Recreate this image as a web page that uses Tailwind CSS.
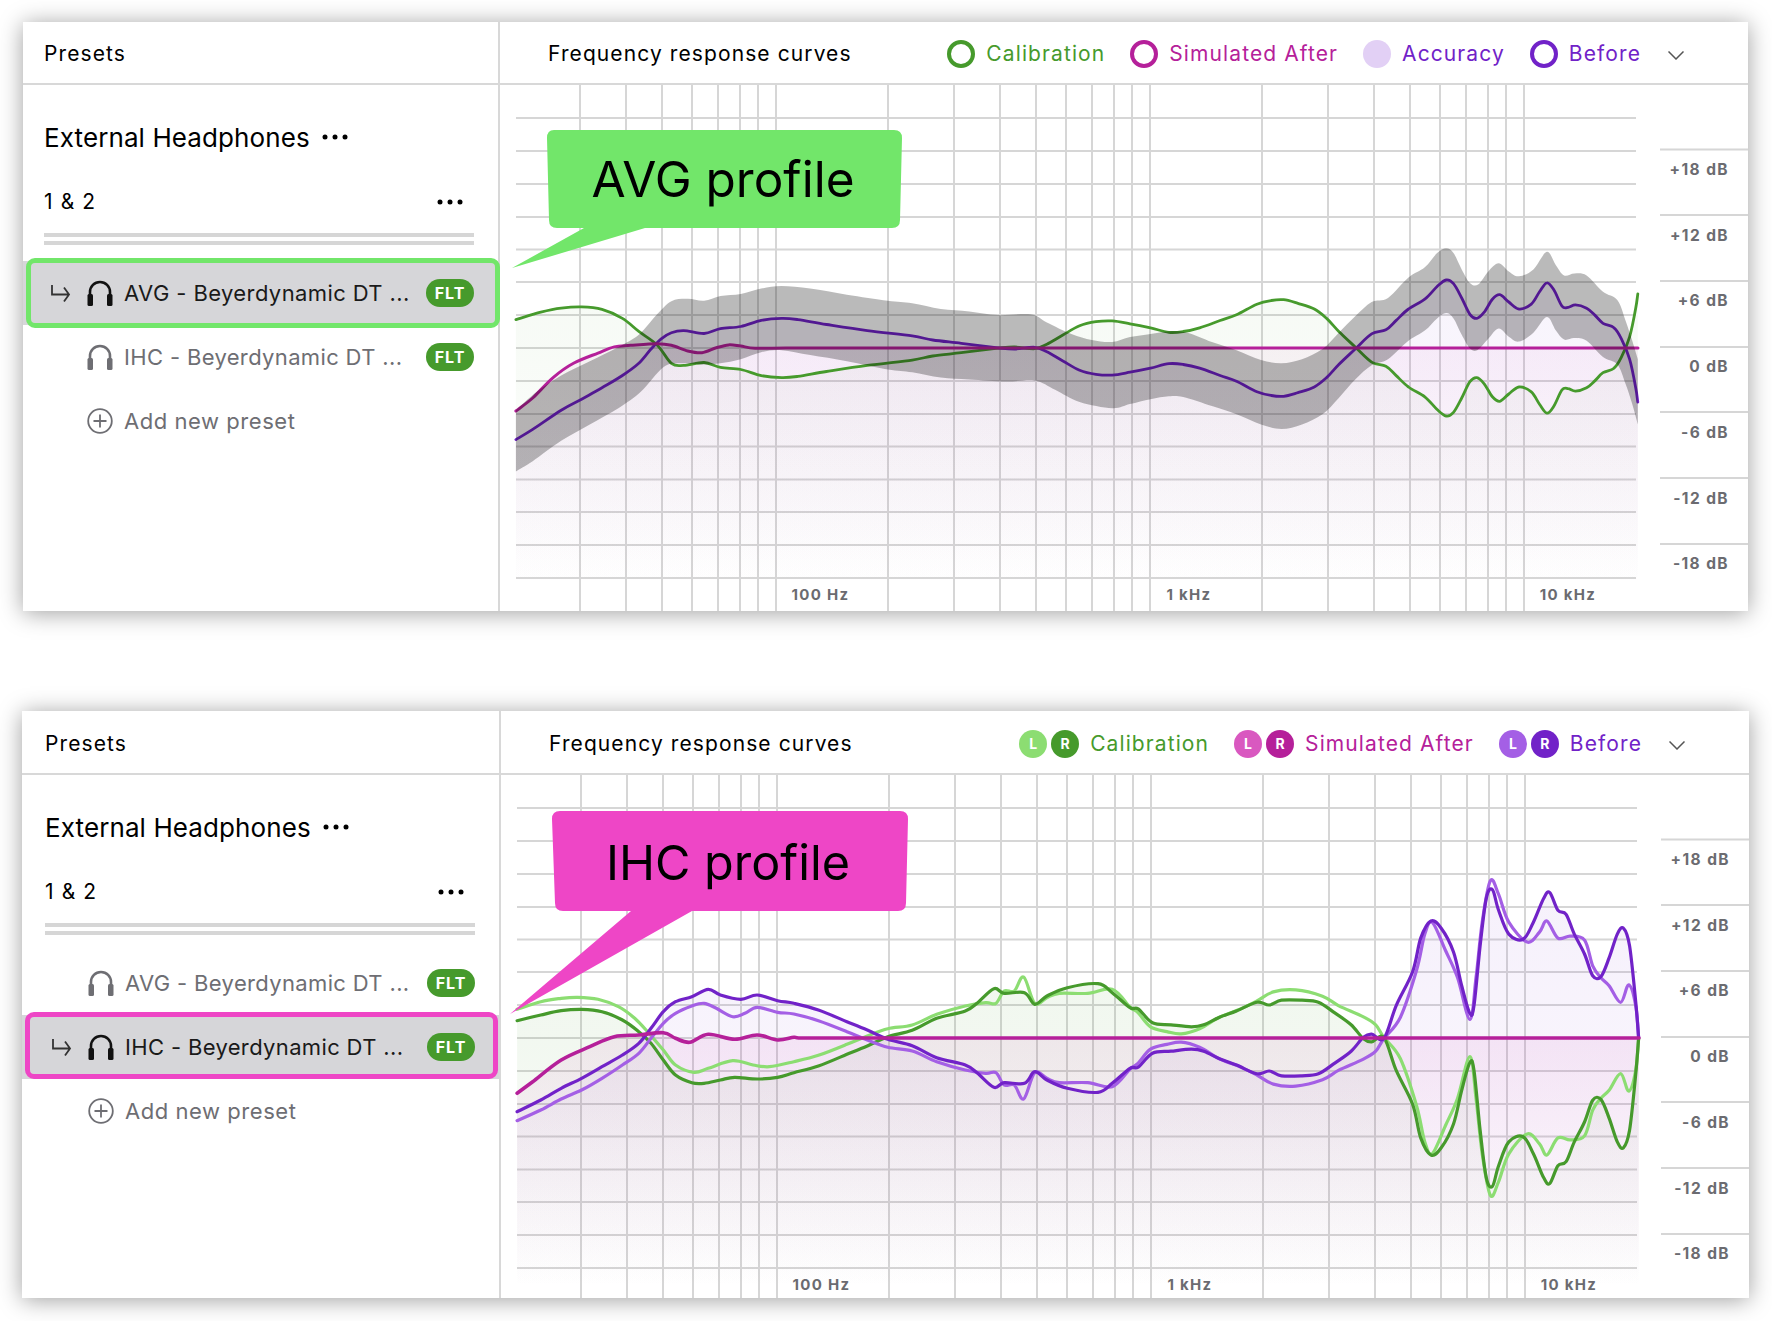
<!DOCTYPE html>
<html lang="en">
<head>
<meta charset="utf-8">
<title>Presets</title>
<script src="https://cdn.jsdelivr.net/npm/@tailwindcss/browser@4"></script>
</head>
<body class="bg-white [font-family:Inter,sans-serif] text-black">
<div class="w-[1772px] h-[1321px] pt-[22px] overflow-hidden">

<!-- PANEL 1 -->
<section class="ml-[23px] w-[1725px] h-[589px] flex bg-white shadow-[0_2px_22px_rgba(0,0,0,0.38)]">
  <aside class="w-[477px] shrink-0 border-r-2 border-[#d8d8d8] flex flex-col">
    <div class="h-[63px] shrink-0 border-b-2 border-[#d8d8d8] flex items-center pl-[21px] pt-[2px] text-[21px] tracking-[1.1px]">Presets</div>
    <div class="pl-[21px] pr-[24px] pt-[33px]">
      <div class="flex items-center h-[38px] gap-[12px] text-[26px] tracking-[0.1px]">External Headphones
        <svg width="26" height="6" viewBox="0 0 26 6" class="fill-black"><circle cx="3" cy="3" r="2.5"/><circle cx="13" cy="3" r="2.5"/><circle cx="23" cy="3" r="2.5"/></svg>
      </div>
      <div class="flex items-center justify-between h-[28px] mt-[32px] text-[21px] tracking-[1.1px]">1 &amp; 2
        <svg width="26" height="6" viewBox="0 0 26 6" class="fill-black mr-[11px]"><circle cx="3" cy="3" r="2.5"/><circle cx="13" cy="3" r="2.5"/><circle cx="23" cy="3" r="2.5"/></svg>
      </div>
      <div class="mt-[17px] h-[4px] bg-[#d6d6d6]"></div>
      <div class="mt-[4px] h-[4px] bg-[#d6d6d6]"></div>
    </div>
    <div class="mt-[16px] relative">
      <div class="h-[64px] bg-[#d6d6d9] relative flex items-center pr-[24px] text-[22px] tracking-[0.4px] text-[#1a1a1a]">
        <div class="absolute left-[3px] right-[-2px] top-[-3px] bottom-[-3px] rounded-[9px] border-[5px] border-[#72e66a]"></div>
        <svg width="21" height="19" viewBox="0 0 21 19" fill="none" class="ml-[27px] stroke-[#333] stroke-[1.8]"><path d="M2 1V10.500H19M14 3.500L19 10.500L14 17.500"/></svg>
        <svg width="26" height="26" viewBox="0 0 26 26" class="ml-[16px] fill-none stroke-[#111]"><path stroke-width="2.6" d="M3 22V12a10 10 0 0 1 20 0V22"/><rect x="0.500" y="14" width="5.500" height="12" rx="1.500" fill="#111" stroke="none"/><rect x="20" y="14" width="5.500" height="12" rx="1.500" fill="#111" stroke="none"/></svg>
        <span class="ml-[11px] flex-1 whitespace-nowrap">AVG - Beyerdynamic DT ...</span>
        <span class="w-[48px] h-[28px] rounded-full bg-[#469a2c] text-white text-[16px] font-bold tracking-[1px] flex items-center justify-center">FLT</span>
      </div>
      <div class="h-[64px] flex items-center pr-[24px] text-[22px] tracking-[0.35px] text-[#6e6e73]">
        <svg width="26" height="26" viewBox="0 0 26 26" class="ml-[64px] fill-none stroke-[#6e6e73]"><path stroke-width="2.6" d="M3 22V12a10 10 0 0 1 20 0V22"/><rect x="0.500" y="14" width="5.500" height="12" rx="1.500" fill="#6e6e73" stroke="none"/><rect x="20" y="14" width="5.500" height="12" rx="1.500" fill="#6e6e73" stroke="none"/></svg>
        <span class="ml-[11px] flex-1 whitespace-nowrap">IHC - Beyerdynamic DT ...</span>
        <span class="w-[48px] h-[28px] rounded-full bg-[#469a2c] text-white text-[16px] font-bold tracking-[1px] flex items-center justify-center">FLT</span>
      </div>
      <div class="h-[64px] flex items-center pr-[24px] text-[22px] tracking-[0.55px] text-[#6e6e73]">
        <svg width="26" height="26" viewBox="0 0 26 26" class="ml-[64px] fill-none stroke-[#6e6e73] stroke-[1.8]"><circle cx="13" cy="13" r="11.800"/><path d="M13 6.500V19.500M6.500 13H19.500"/></svg>
        <span class="ml-[11px]">Add new preset</span>
      </div>
    </div>
  </aside>
  <div class="flex-1 flex flex-col min-w-0">
    <header class="h-[63px] shrink-0 border-b-2 border-[#d8d8d8] flex items-center justify-between pl-[48px] pr-[64px] pt-[2px] text-[21px] tracking-[1.1px]">
      <span class="whitespace-nowrap">Frequency response curves</span>
      <div class="flex items-center gap-[25px]">
        <div class="flex items-center gap-[11px] text-[#469a2c]"><span class="w-[28px] h-[28px] rounded-full border-4 border-[#469a2c]"></span>Calibration</div>
        <div class="flex items-center gap-[11px] text-[#b5209a]"><span class="w-[28px] h-[28px] rounded-full border-4 border-[#b5209a]"></span>Simulated After</div>
        <div class="flex items-center gap-[11px] text-[#7122c8]"><span class="w-[28px] h-[28px] rounded-full bg-[#e2d0f5]"></span>Accuracy</div>
        <div class="flex items-center gap-[11px] text-[#7122c8]"><span class="w-[28px] h-[28px] rounded-full border-4 border-[#7122c8]"></span>Before</div>
        <svg width="16" height="9" viewBox="0 0 16 9" class="fill-none stroke-[#555] stroke-[1.5] mt-[4px] ml-[2px]"><path d="M0.5 0.5L8 8L15.5 0.5"/></svg>
      </div>
    </header>
    <svg id="c1" width="1248" height="526" viewBox="500 85 1248 526" class="block [font-family:Inter,sans-serif]">
      <path class="fill-none stroke-[#d6d6d6] stroke-2" d="M580 85V611M626 85V611M662 85V611M692 85V611M718 85V611M740 85V611M758 85V611M776 85V611M888 85V611M954 85V611M1000 85V611M1036 85V611M1066 85V611M1092 85V611M1114 85V611M1132 85V611M1150 85V611M1262 85V611M1328 85V611M1374 85V611M1410 85V611M1440 85V611M1466 85V611M1488 85V611M1506 85V611M1524 85V611"/>
      <path class="fill-none stroke-[#d6d6d6] stroke-2" d="M516 118H1636M516 151H1636M516 184H1636M516 217H1636M516 249.500H1636M516 282H1636M516 315H1636M516 348H1636M516 381H1636M516 414H1636M516 446.500H1636M516 479.500H1636M516 512H1636M516 545H1636M516 578H1636M1660 149.500H1748M1660 215H1748M1660 281H1748M1660 347H1748M1660 412H1748M1660 478H1748M1660 544H1748"/>
      <defs>
        <linearGradient id="gg1" gradientUnits="userSpaceOnUse" x1="0" y1="250" x2="0" y2="590"><stop offset="0" stop-color="#469a2c" stop-opacity=".05"/><stop offset=".3" stop-color="#469a2c" stop-opacity=".04"/><stop offset="1" stop-color="#469a2c" stop-opacity="0"/></linearGradient>
        <linearGradient id="gp1" gradientUnits="userSpaceOnUse" x1="0" y1="250" x2="0" y2="590"><stop offset="0" stop-color="#7122c8" stop-opacity=".05"/><stop offset=".3" stop-color="#7122c8" stop-opacity=".045"/><stop offset="1" stop-color="#7122c8" stop-opacity="0"/></linearGradient>
        <linearGradient id="gm1" gradientUnits="userSpaceOnUse" x1="0" y1="340" x2="0" y2="590"><stop offset="0" stop-color="#c020a0" stop-opacity=".05"/><stop offset="1" stop-color="#c020a0" stop-opacity="0"/></linearGradient>
      </defs>
      <g id="p1"></g>
      <path fill="#72e66a" d="M554 130H894Q902 130 902 138L900 220Q900 228 892 228H645L512 268L584 228H557Q549 228 549 220L547 138Q547 130 554 130Z"/>
      <text x="723" y="197" text-anchor="middle" font-size="49.500" fill="#000">AVG profile</text>
      <g class="fill-[#6b6b70] font-bold text-[15.5px] tracking-[1.4px]" text-anchor="end">
        <text x="1729" y="175">+18 dB</text><text x="1729" y="241">+12 dB</text><text x="1729" y="306">+6 dB</text><text x="1729" y="372">0 dB</text><text x="1729" y="438">-6 dB</text><text x="1729" y="504">-12 dB</text><text x="1729" y="569">-18 dB</text>
      </g>
      <g class="fill-[#6b6b70] font-bold text-[15px] tracking-[1.3px]" text-anchor="middle">
        <text x="820.500" y="600">100 Hz</text><text x="1189" y="600">1 kHz</text><text x="1568" y="600">10 kHz</text>
      </g>
    </svg>
  </div>
</section>

<!-- PANEL 2 -->
<section class="mt-[100px] ml-[22px] w-[1727px] h-[587px] flex bg-white shadow-[0_2px_22px_rgba(0,0,0,0.38)]">
  <aside class="w-[479px] shrink-0 border-r-2 border-[#d8d8d8] flex flex-col">
    <div class="h-[64px] shrink-0 border-b-2 border-[#d8d8d8] flex items-center pl-[23px] pt-[3px] text-[21px] tracking-[1.1px]">Presets</div>
    <div class="pl-[23px] pr-[24px] pt-[33px]">
      <div class="flex items-center h-[38px] gap-[12px] text-[26px] tracking-[0.1px]">External Headphones
        <svg width="26" height="6" viewBox="0 0 26 6" class="fill-black"><circle cx="3" cy="3" r="2.5"/><circle cx="13" cy="3" r="2.5"/><circle cx="23" cy="3" r="2.5"/></svg>
      </div>
      <div class="flex items-center justify-between h-[28px] mt-[32px] text-[21px] tracking-[1.1px]">1 &amp; 2
        <svg width="26" height="6" viewBox="0 0 26 6" class="fill-black mr-[11px]"><circle cx="3" cy="3" r="2.5"/><circle cx="13" cy="3" r="2.5"/><circle cx="23" cy="3" r="2.5"/></svg>
      </div>
      <div class="mt-[17px] h-[4px] bg-[#d6d6d6]"></div>
      <div class="mt-[4px] h-[4px] bg-[#d6d6d6]"></div>
    </div>
    <div class="mt-[16px] relative">
      <div class="h-[64px] flex items-center pr-[24px] text-[22px] tracking-[0.35px] text-[#6e6e73]">
        <svg width="26" height="26" viewBox="0 0 26 26" class="ml-[66px] fill-none stroke-[#6e6e73]"><path stroke-width="2.6" d="M3 22V12a10 10 0 0 1 20 0V22"/><rect x="0.500" y="14" width="5.500" height="12" rx="1.500" fill="#6e6e73" stroke="none"/><rect x="20" y="14" width="5.500" height="12" rx="1.500" fill="#6e6e73" stroke="none"/></svg>
        <span class="ml-[11px] flex-1 whitespace-nowrap">AVG - Beyerdynamic DT ...</span>
        <span class="w-[48px] h-[28px] rounded-full bg-[#469a2c] text-white text-[16px] font-bold tracking-[1px] flex items-center justify-center">FLT</span>
      </div>
      <div class="h-[64px] bg-[#d6d6d9] relative flex items-center pr-[24px] text-[22px] tracking-[0.35px] text-[#1a1a1a]">
        <div class="absolute left-[3px] right-[1px] top-[-3px] bottom-0 rounded-[9px] border-[5px] border-[#ee46c6]"></div>
        <svg width="21" height="19" viewBox="0 0 21 19" fill="none" class="ml-[29px] stroke-[#333] stroke-[1.8]"><path d="M2 1V10.500H19M14 3.500L19 10.500L14 17.500"/></svg>
        <svg width="26" height="26" viewBox="0 0 26 26" class="ml-[16px] fill-none stroke-[#111]"><path stroke-width="2.6" d="M3 22V12a10 10 0 0 1 20 0V22"/><rect x="0.500" y="14" width="5.500" height="12" rx="1.500" fill="#111" stroke="none"/><rect x="20" y="14" width="5.500" height="12" rx="1.500" fill="#111" stroke="none"/></svg>
        <span class="ml-[11px] flex-1 whitespace-nowrap">IHC - Beyerdynamic DT ...</span>
        <span class="w-[48px] h-[28px] rounded-full bg-[#469a2c] text-white text-[16px] font-bold tracking-[1px] flex items-center justify-center">FLT</span>
      </div>
      <div class="h-[64px] flex items-center pr-[24px] text-[22px] tracking-[0.55px] text-[#6e6e73]">
        <svg width="26" height="26" viewBox="0 0 26 26" class="ml-[66px] fill-none stroke-[#6e6e73] stroke-[1.8]"><circle cx="13" cy="13" r="11.800"/><path d="M13 6.500V19.500M6.500 13H19.500"/></svg>
        <span class="ml-[11px]">Add new preset</span>
      </div>
    </div>
  </aside>
  <div class="flex-1 flex flex-col min-w-0">
    <header class="h-[64px] shrink-0 border-b-2 border-[#d8d8d8] flex items-center justify-between pl-[48px] pr-[64px] pt-[3px] text-[21px] tracking-[1.1px]">
      <span class="whitespace-nowrap">Frequency response curves</span>
      <div class="flex items-center gap-[25px]">
        <div class="flex items-center gap-[11px] text-[#469a2c]"><span class="flex gap-[4px]"><span class="w-[28px] h-[28px] rounded-full bg-[#8cdd72] text-white text-[14px] tracking-normal font-bold flex items-center justify-center">L</span><span class="w-[28px] h-[28px] rounded-full bg-[#469a2c] text-white text-[14px] tracking-normal font-bold flex items-center justify-center">R</span></span>Calibration</div>
        <div class="flex items-center gap-[11px] text-[#b5209a]"><span class="flex gap-[4px]"><span class="w-[28px] h-[28px] rounded-full bg-[#d958c0] text-white text-[14px] tracking-normal font-bold flex items-center justify-center">L</span><span class="w-[28px] h-[28px] rounded-full bg-[#b5209a] text-white text-[14px] tracking-normal font-bold flex items-center justify-center">R</span></span>Simulated After</div>
        <div class="flex items-center gap-[11px] text-[#7122c8]"><span class="flex gap-[4px]"><span class="w-[28px] h-[28px] rounded-full bg-[#a45fe5] text-white text-[14px] tracking-normal font-bold flex items-center justify-center">L</span><span class="w-[28px] h-[28px] rounded-full bg-[#7122c8] text-white text-[14px] tracking-normal font-bold flex items-center justify-center">R</span></span>Before</div>
        <svg width="16" height="9" viewBox="0 0 16 9" class="fill-none stroke-[#555] stroke-[1.5] mt-[4px] ml-[2px]"><path d="M0.5 0.5L8 8L15.5 0.5"/></svg>
      </div>
    </header>
    <svg id="c2" width="1248" height="523" viewBox="500 85 1248 523" class="block [font-family:Inter,sans-serif]">
      <path class="fill-none stroke-[#d6d6d6] stroke-2" d="M580 85V611M626 85V611M662 85V611M692 85V611M718 85V611M740 85V611M758 85V611M776 85V611M888 85V611M954 85V611M1000 85V611M1036 85V611M1066 85V611M1092 85V611M1114 85V611M1132 85V611M1150 85V611M1262 85V611M1328 85V611M1374 85V611M1410 85V611M1440 85V611M1466 85V611M1488 85V611M1506 85V611M1524 85V611"/>
      <path class="fill-none stroke-[#d6d6d6] stroke-2" d="M516 118H1636M516 151H1636M516 184H1636M516 217H1636M516 249.500H1636M516 282H1636M516 315H1636M516 348H1636M516 381H1636M516 414H1636M516 446.500H1636M516 479.500H1636M516 512H1636M516 545H1636M516 578H1636M1660 149.500H1748M1660 215H1748M1660 281H1748M1660 347H1748M1660 412H1748M1660 478H1748M1660 544H1748"/>
      <defs>
        <linearGradient id="gg2" gradientUnits="userSpaceOnUse" x1="0" y1="250" x2="0" y2="600"><stop offset="0" stop-color="#469a2c" stop-opacity=".08"/><stop offset=".3" stop-color="#469a2c" stop-opacity=".07"/><stop offset="1" stop-color="#469a2c" stop-opacity="0"/></linearGradient>
        <linearGradient id="gp2" gradientUnits="userSpaceOnUse" x1="0" y1="250" x2="0" y2="600"><stop offset="0" stop-color="#7122c8" stop-opacity=".06"/><stop offset=".3" stop-color="#7122c8" stop-opacity=".05"/><stop offset="1" stop-color="#7122c8" stop-opacity="0"/></linearGradient>
        <linearGradient id="gm2" gradientUnits="userSpaceOnUse" x1="0" y1="340" x2="0" y2="600"><stop offset="0" stop-color="#c020a0" stop-opacity=".08"/><stop offset="1" stop-color="#c020a0" stop-opacity="0"/></linearGradient>
      </defs>
      <g id="p2"></g>
      <path fill="#ee46c6" d="M559 121H899Q907 121 907 129L905 213Q905 221 897 221H691L509 324L630 221H562Q554 221 554 213L551 129Q551 121 559 121Z"/>
      <text x="727" y="190" text-anchor="middle" font-size="48.500" fill="#000">IHC profile</text>
      <g class="fill-[#6b6b70] font-bold text-[15.5px] tracking-[1.4px]" text-anchor="end">
        <text x="1729" y="175">+18 dB</text><text x="1729" y="241">+12 dB</text><text x="1729" y="306">+6 dB</text><text x="1729" y="372">0 dB</text><text x="1729" y="438">-6 dB</text><text x="1729" y="504">-12 dB</text><text x="1729" y="569">-18 dB</text>
      </g>
      <g class="fill-[#6b6b70] font-bold text-[15px] tracking-[1.3px]" text-anchor="middle">
        <text x="820.500" y="600">100 Hz</text><text x="1189" y="600">1 kHz</text><text x="1568" y="600">10 kHz</text>
      </g>
    </svg>
  </div>
</section>
</div>

<script>
const NS='http://www.w3.org/2000/svg';
const G='#469a2c',LG='#8cdd72',M='#b5209a',V='#7122c8',LV='#a45fe5';
const z2=a=>a.map(([x,y])=>[500+x/2.45,y/2.45]);
const z3=a=>a.map(([x,y])=>[1130+x/2.442,y/2.45]);
const z5=a=>a.map(([x,y])=>[499+x/2.45,210+y/3]);
const z6=a=>a.map(([x,y])=>[1129+x/2.442,10+y/2.52]);
const mirror=a=>a.map(([x,y])=>[x,696-y]);
function line(p){
  let d='M'+p[0][0].toFixed(1)+' '+p[0][1].toFixed(1);
  for(let i=0;i<p.length-1;i++){
    const a=p[Math.max(i-1,0)],b=p[i],c=p[i+1],e=p[Math.min(i+2,p.length-1)];
    d+='C'+(b[0]+(c[0]-a[0])/6).toFixed(1)+' '+(b[1]+(c[1]-a[1])/6).toFixed(1)+' '+(c[0]-(e[0]-b[0])/6).toFixed(1)+' '+(c[1]-(e[1]-b[1])/6).toFixed(1)+' '+c[0].toFixed(1)+' '+c[1].toFixed(1);
  }
  return d;
}
function add(g,d,attrs){const e=document.createElementNS(NS,'path');e.setAttribute('d',d);for(const k in attrs)e.setAttribute(k,attrs[k]);g.appendChild(e);}
function area(p,fill,g){add(g,line(p)+'L'+p[p.length-1][0].toFixed(1)+' 611L'+p[0][0].toFixed(1)+' 611Z',{fill});}
function stroke(p,c,w,g){add(g,line(p),{fill:'none',stroke:c,'stroke-width':w,'stroke-linejoin':'round','stroke-linecap':'round'});}
const flat=(x0)=>{const r=[];for(let x=x0;x<1636;x+=40)r.push([x,348]);r.push([1638,348]);return r;};

/* panel 1 */
const b1=[...z2([[39,1077],[80,1052],[150,1005],[200,978],[250,950],[300,920],[340,890],[370,855],[395,830],[420,815],[450,810],[500,817],[540,805],[590,800],[640,785],[690,780],[730,783],[800,795],[900,810],[1010,823],[1060,833],[1130,841],[1220,852],[1260,855],[1310,851],[1340,862],[1380,885],[1420,907],[1460,917],[1500,919]]),
 ...z3([[0,912],[50,902],[95,891],[130,893],[170,902],[220,920],[260,934],[310,960],[345,969],[375,971],[410,962],[450,948],[480,925],[510,893],[550,855],[590,818],[625,808],[650,785],[680,757],[720,733],[750,702],[772,686],[790,695],[810,730],[830,770],[847,780],[865,765],[885,733],[903,722],[925,740],[950,757],[980,745],[1000,715],[1018,693],[1035,710],[1055,750],[1070,753],[1088,747],[1115,755],[1135,772],[1155,792],[1182,803],[1200,830],[1220,880],[1235,950],[1240,985]])];
const c1=[...z2([[39,783],[100,765],[150,755],[200,752],[250,758],[300,780],[340,812],[385,845]]),...mirror(b1).filter(p=>p[0]>670)];
const s1=[...z2([[39,1007],[80,975],[130,925],[180,890],[240,865],[280,850],[320,846],[385,842],[420,846],[460,860],[495,864],[530,852],[560,845],[590,848],[625,853]]),...flat(786)];
const up=[...z2([[39,1005],[90,960],[150,920],[220,885],[290,850],[340,820],[385,770],[420,738],[460,732],[500,737],[540,725],[590,720],[640,707],[690,701],[760,707],[850,722],[950,737],[1010,743],[1080,757],[1150,763],[1220,772],[1300,770],[1340,790],[1400,818],[1450,833],[1500,838]]),
 ...z3([[0,826],[50,818],[95,812],[140,815],[200,838],[260,858],[320,882],[370,890],[420,880],[470,855],[510,815],[550,775],[590,740],[630,730],[680,680],[720,655],[750,620],[772,608],[790,620],[810,660],[830,693],[850,697],[875,665],[900,645],[925,665],[950,677],[985,660],[1018,617],[1040,650],[1060,675],[1085,670],[1115,675],[1155,715],[1190,735],[1210,785],[1225,830],[1240,880]])];
const lo=[...z2([[39,1155],[80,1130],[150,1080],[220,1040],[290,1000],[345,960],[400,900],[440,890],[500,893],[540,890],[590,880],[640,863],[690,858],[760,870],[850,885],[950,905],[1010,912],[1080,925],[1150,930],[1240,935],[1310,932],[1360,955],[1420,985],[1500,1000]]),
 ...z3([[0,990],[50,978],[95,971],[130,973],[200,995],[260,1015],[320,1040],[370,1051],[420,1040],[470,1015],[510,975],[550,930],[590,895],[630,880],[680,835],[720,810],[750,780],[772,767],[790,780],[810,820],[830,853],[848,858],[875,830],[900,805],[925,825],[950,837],[985,815],[1018,777],[1040,810],[1060,832],[1085,828],[1115,835],[1155,875],[1190,893],[1210,940],[1225,985],[1240,1040]])];
const g1=document.getElementById('p1');
area(c1,'url(#gg1)',g1);area(b1,'url(#gp1)',g1);area(s1,'url(#gm1)',g1);
stroke(c1,G,2.8,g1);stroke(b1,V,2.8,g1);stroke(s1,M,3,g1);
add(g1,line(up)+'L'+line([...lo].reverse()).slice(1)+'Z',{fill:'#000','fill-opacity':'.27'});

/* panel 2 */
const b2=[...z5([[42,635],[100,600],[150,565],[200,535],[250,500],[300,465],[340,430],[370,385],[400,335],[430,305],[470,290],[510,268],[540,285],[590,298],[630,285],[680,302],[720,310],[780,330],[850,365],[900,390],[950,418],[1010,437],[1070,473],[1140,495],[1170,520],[1210,562],[1235,548],[1285,550],[1310,515],[1340,540],[1390,565],[1465,577],[1500,550]]),
 ...z6([[0,928],[20,925],[55,890],[100,885],[150,880],[180,885],[220,905],[260,920],[310,942],[340,935],[370,947],[420,947],[460,942],[500,915],[540,885],[570,850],[590,842],[620,853],[650,770],[690,685],[710,600],[735,557],[760,575],[790,635],[810,720],[830,790],[840,770],[855,620],[870,500],[885,478],[900,530],[925,590],[960,603],[985,560],[1010,500],[1025,485],[1045,530],[1065,540],[1085,590],[1110,640],[1130,695],[1150,697],[1170,650],[1190,590],[1205,575],[1220,620],[1235,760],[1242,850]])];
const l2=[...z5([[42,662],[100,630],[150,597],[200,570],[250,535],[300,495],[340,460],[370,415],[400,370],[430,340],[470,318],[500,310],[530,325],[570,350],[600,340],[630,322],[680,337],[720,342],[780,362],[850,395],[900,420],[950,442],[1010,453],[1070,485],[1140,510],[1190,520],[1215,518],[1235,555],[1260,555],[1283,597],[1310,518],[1340,535],[1370,548],[1440,548],[1500,560]]),
 ...z6([[0,930],[20,915],[50,880],[90,868],[125,862],[170,875],[220,905],[270,925],[310,945],[350,968],[405,973],[470,957],[510,933],[570,905],[600,885],[620,853],[660,800],[700,680],[720,590],[738,560],[770,630],[800,700],[830,805],[845,700],[860,560],[880,455],[900,490],[925,560],[970,610],[1000,585],[1018,557],[1045,600],[1075,595],[1110,605],[1130,670],[1150,700],[1170,720],[1198,762],[1218,718],[1235,770],[1242,850]])];
const s2=[...z5([[42,580],[80,545],[150,480],[220,440],[280,410],[340,405],[400,398],[430,415],[465,427],[510,403],[575,418],[630,405],[680,420],[720,412]]),...flat(800)];
const c2=[...z5([[42,362],[100,345],[150,332],[200,328],[250,335],[300,360],[340,395],[370,430],[400,480],[430,525],[470,548],[500,550],[540,540],[575,532],[630,537],[680,532]]),...mirror(b2).filter(p=>p[0]>788)];
const d2=[...z5([[42,328],[100,305],[150,295],[190,292],[240,298],[290,320],[330,355],[365,400],[400,450],[430,495],[475,517],[510,505],[570,482],[620,495],[660,500],[720,485]]),...mirror(l2).filter(p=>p[0]>800)];
const g2=document.getElementById('p2');
area(c2,'url(#gg2)',g2);area(b2,'url(#gp2)',g2);area(s2,'url(#gm2)',g2);
stroke(d2,LG,3.2,g2);stroke(c2,G,3.2,g2);stroke(l2,LV,3.2,g2);stroke(b2,V,3.2,g2);stroke(s2,M,3.6,g2);
</script>
</body>
</html>
